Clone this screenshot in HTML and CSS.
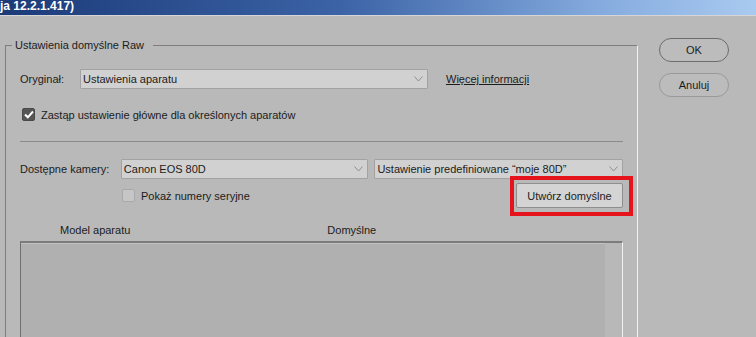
FILE: index.html
```html
<!DOCTYPE html>
<html lang="pl">
<head>
    <meta charset="UTF-8">
    <title>Preferencje Camera Raw</title>
    <link rel="stylesheet" href="styles.css">
</head>
<body>
    <div class="titlebar">ja 12.2.1.417)</div>

    <div class="dialog">
        <fieldset class="group">
            <legend>Ustawienia domyślne Raw</legend>

            <div class="row row-original">
                <span class="label">Oryginał:</span>
                <div class="select select-original">
                    <span>Ustawienia aparatu</span>
                    <svg class="chevron" width="9" height="6" viewBox="0 0 9 6"><path d="M0.5 0.5 L4.5 5 L8.5 0.5" fill="none" stroke="#8e8e8e" stroke-width="1"/></svg>
                </div>
                <a href="#" class="more">Więcej informacji</a>
            </div>

            <label class="check row-override">
                <span class="box checked">
                    <svg width="10" height="9" viewBox="0 0 10 9"><path d="M1 4.5 L3.8 7.3 L9 1.5" fill="none" stroke="#fff" stroke-width="2"/></svg>
                </span>
                Zastąp ustawienie główne dla określonych aparatów
            </label>

            <hr class="separator">

            <div class="row row-camera">
                <span class="label">Dostępne kamery:</span>
                <div class="select select-camera">
                    <span>Canon EOS 80D</span>
                    <svg class="chevron" width="9" height="6" viewBox="0 0 9 6"><path d="M0.5 0.5 L4.5 5 L8.5 0.5" fill="none" stroke="#8e8e8e" stroke-width="1"/></svg>
                </div>
                <div class="select select-preset">
                    <span>Ustawienie predefiniowane “moje 80D”</span>
                    <svg class="chevron" width="9" height="6" viewBox="0 0 9 6"><path d="M0.5 0.5 L4.5 5 L8.5 0.5" fill="none" stroke="#8e8e8e" stroke-width="1"/></svg>
                </div>
            </div>

            <div class="row row-serial">
                <label class="check">
                    <span class="box"></span>
                    Pokaż numery seryjne
                </label>
                <div class="highlight">
                    <button class="btn-create">Utwórz domyślne</button>
                </div>
            </div>

            <div class="columns">
                <span class="col-model">Model aparatu</span>
                <span class="col-default">Domyślne</span>
            </div>

            <div class="list">
                <div class="list-body"></div>
                <div class="list-scroll"></div>
            </div>
        </fieldset>

        <div class="actions">
            <button class="pill">OK</button>
            <button class="pill pill-light">Anuluj</button>
        </div>
    </div>
</body>
</html>
```

FILE: styles.css
```css
body {
    margin: 0;
    height: 337px;
    overflow: hidden;
    background: #b9b9b9;
    font-family: "Liberation Sans", Arial, sans-serif;
    font-size: 11px;
    color: #1c1c1c;
}

.titlebar {
    height: 15px;
    line-height: 13px;
    background: linear-gradient(to right, #1c3a78 0%, #3b63a6 45%, #86acdf 80%, #a9caf0 100%);
    color: #fff;
    font-weight: bold;
    font-size: 12px;
    border-bottom: 1px solid #d6d6d6;
    overflow: hidden;
}

.dialog {
    display: flex;
    align-items: flex-start;
    padding: 22px 0 0 5px;
}

.group {
    box-sizing: border-box;
    margin: 0;
    width: 633px;
    min-width: 0;
    height: 299px;
    padding: 0 14px;
    border: none;
    border-top: 1px solid #7e7e7e;
    border-left: 1px solid #7e7e7e;
    border-right: 1px solid #f2f2f2;
}

.group legend {
    padding: 0 9px 0 3px;
    margin-left: -8px;
    line-height: 14px;
}

.row {
    display: flex;
    align-items: center;
}

.label {
    white-space: nowrap;
}

.select {
    display: flex;
    align-items: center;
    justify-content: space-between;
    box-sizing: border-box;
    height: 20px;
    padding: 0 4px 0 2px;
    background: #d1d1d1;
    border: 1px solid #a2a2a2;
    border-radius: 1px;
    white-space: nowrap;
}

.chevron {
    flex: none;
}

.row-original {
    margin-top: 17px;
}

.row-original .label {
    width: 60px;
}

.select-original {
    width: 348px;
}

.more {
    margin-left: 18px;
    color: #1c1c1c;
    text-decoration: underline;
}

.check {
    display: flex;
    align-items: center;
    gap: 6px;
}

.box {
    display: flex;
    align-items: center;
    justify-content: center;
    box-sizing: border-box;
    width: 13px;
    height: 13px;
    background: #c6c6c6;
    border: 1px solid #a9a9a9;
    border-radius: 2px;
}

.box.checked {
    background: #555;
    border-color: #4a4a4a;
}

.row-override {
    margin: 19px 0 0 2px;
}

.separator {
    margin: 20px 0 0 0;
    border: none;
    border-top: 1px solid #8a8a8a;
    height: 0;
}

.row-camera {
    margin-top: 17px;
}

.row-camera .label {
    width: 101px;
}

.select-camera {
    width: 248px;
}

.select-preset {
    width: 249px;
    margin-left: 6px;
}

.row-serial {
    margin-top: 4px;
    height: 25px;
}

.row-serial .check {
    margin-left: 102px;
}

.highlight {
    position: relative;
    margin-left: auto;
}

.highlight::after {
    content: "";
    position: absolute;
    left: -6px;
    top: -7px;
    right: -10px;
    bottom: -8px;
    border: 4px solid #e5131c;
}

.btn-create {
    display: block;
    box-sizing: border-box;
    width: 107px;
    height: 25px;
    background: #d4d4d4;
    border: 1px solid #8e8e8e;
    border-radius: 2px;
    font: inherit;
    color: #1c1c1c;
}

.columns {
    display: flex;
    margin-top: 15px;
    height: 14px;
    line-height: 14px;
}

.col-model {
    margin-left: 40px;
}

.col-default {
    margin-left: 197px;
}

.list {
    display: flex;
    margin-top: 4px;
    height: 97px;
    border-top: 2px solid #7c7c7c;
    border-left: 1px solid #6f6f6f;
    border-right: 1px solid #f2f2f2;
}

.list-body {
    flex: 1;
    background: #b0b0b0;
    border-top: 1px solid #c2c2c2;
}

.list-scroll {
    width: 17px;
    background: #b8b8b8;
}

.actions {
    display: flex;
    flex-direction: column;
    gap: 11px;
    margin: 0 0 0 21px;
}

.pill {
    box-sizing: border-box;
    width: 70px;
    height: 24px;
    background: #bcbcbc;
    border: 1px solid #6c6c6c;
    border-radius: 12px;
    font: inherit;
    color: #1c1c1c;
}

.pill-light {
    border-color: #999;
}
```
